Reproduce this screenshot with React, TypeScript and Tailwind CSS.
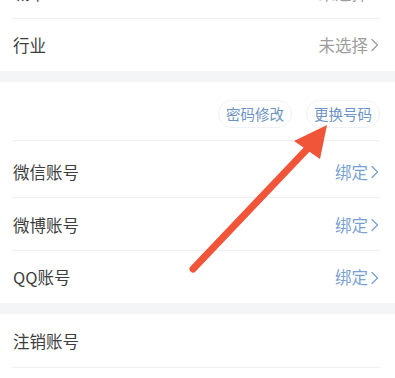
import React from "react";

const Chevron = ({ color }: { color: string }) => (
  <svg width="9" height="16" viewBox="0 0 9 16" className="ml-[2px]">
    <polyline points="2,2.5 7.5,8 2,13.5" fill="none" stroke={color} strokeWidth="1.3" strokeLinecap="round" strokeLinejoin="round" />
  </svg>
);

const Row = ({
  label,
  value,
  blue,
  h,
  line = true,
  extra = "",
}: {
  label: string;
  value?: string;
  blue?: boolean;
  h: string;
  line?: boolean;
  extra?: string;
}) => (
  <div className={`relative flex items-center justify-between pl-[13px] pr-[16px] ${h} ${extra}`}>
    <span className="text-[16.5px] text-[#3d3d3d]">{label}</span>
    {value && (
      <span className={`flex items-center text-[16.5px] ${blue ? "text-[#7aa0d2]" : "text-[#9d9d9d]"}`}>
        {value}
        <Chevron color={blue ? "#7aa0d2" : "#9d9d9d"} />
      </span>
    )}
    {line && <div className="absolute bottom-0 left-[12px] right-[15px] h-px bg-[#eeeff1]" />}
  </div>
);

export default function App() {
  return (
    <div
      className="relative w-[395px] h-[378px] overflow-hidden bg-white"
      style={{ fontFamily: '"Noto Sans CJK SC", "Noto Sans", sans-serif' }}
    >
      <Row label="城市" value="未选择" h="h-[52px]" extra="-mt-[33px]" />
      <Row label="行业" value="未选择" h="h-[52px]" line={false} />
      <div className="h-[11px] bg-[#f4f5f7]" />
      <div className="relative flex h-[59px] items-center justify-end gap-[14px] pr-[15px] pt-[4px]">
        <span className="flex h-[28px] items-center rounded-full border border-[#eef1f5] px-[7px] text-[14.5px] text-[#6d92c4]">
          密码修改
        </span>
        <span className="flex h-[28px] items-center rounded-full border border-[#eef1f5] px-[7px] text-[14.5px] text-[#6d92c4]">
          更换号码
        </span>
        <div className="absolute bottom-0 left-[12px] right-[15px] h-px bg-[#eeeff1]" />
      </div>
      <Row label="微信账号" value="绑定" blue h="h-[57px]" extra="pt-[5px]" />
      <Row label="微博账号" value="绑定" blue h="h-[53px]" extra="pt-[1px]" />
      <Row label="QQ账号" value="绑定" blue h="h-[52px]" extra="pt-[1px]" line={false} />
      <div className="h-[11px] bg-[#f4f5f7]" />
      <Row label="注销账号" h="h-[54px]" />

      <svg className="absolute left-0 top-0 pointer-events-none" width="395" height="378" viewBox="0 0 395 378">
        <line x1="193" y1="269" x2="310" y2="146" stroke="#f0553a" strokeWidth="7" strokeLinecap="round" />
        <polygon points="327,125 294,141 320,159" fill="#f0553a" />
      </svg>
    </div>
  );
}
